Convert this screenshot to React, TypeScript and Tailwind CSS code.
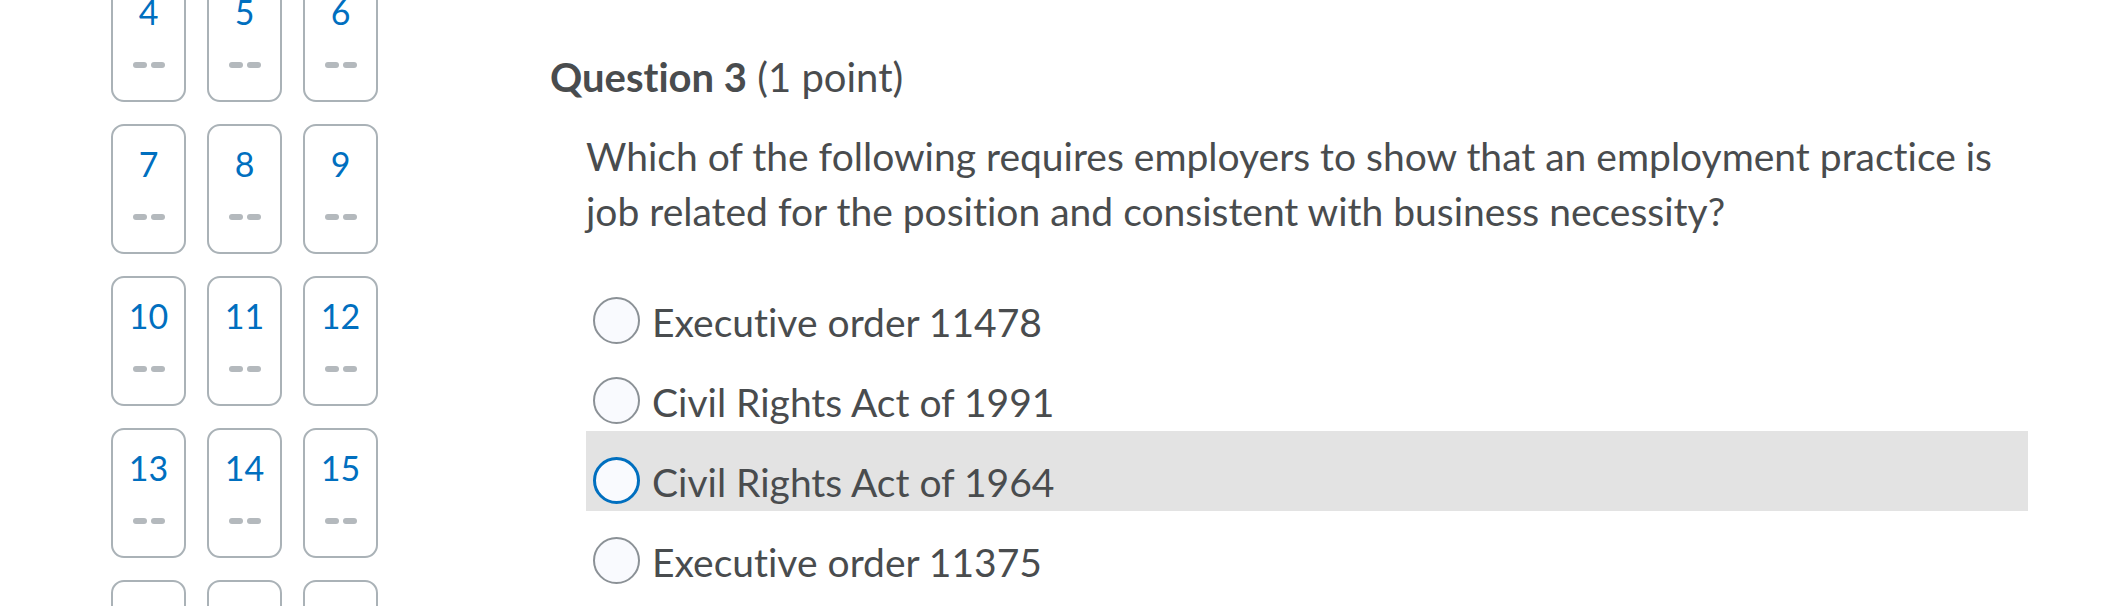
const tiles = Array.from({ length: 15 }, (_, i) => i + 4)

const options = [
  { label: "Executive order 11478", focused: false },
  { label: "Civil Rights Act of 1991", focused: false },
  { label: "Civil Rights Act of 1964", focused: true },
  { label: "Executive order 11375", focused: false },
]

function QuestionTile({ n }: { n: number }) {
  return (
    <div className="h-[130px] w-[75px] rounded-[13px] border-2 border-[#aab2b7] bg-white flex flex-col items-center">
      <span className="pt-[18px] text-[34px] leading-[40px] text-[#006fbf]">{n}</span>
      <div className="mt-[30px] flex gap-[4px]">
        <span className="h-[6px] w-[14px] rounded-[3px] bg-[#b4b9bd]" />
        <span className="h-[6px] w-[14px] rounded-[3px] bg-[#b4b9bd]" />
      </div>
    </div>
  )
}

export default function App() {
  return (
    <div
      className="h-[606px] w-[2125px] overflow-hidden bg-white text-[#494c4e] flex [font-variant-ligatures:none]"
      style={{ fontFamily: "Lato, 'Open Sans', sans-serif" }}
    >
      {/* question navigator, scrolled part-way */}
      <div className="pl-[111px] -mt-[28px]">
        <div className="grid grid-cols-[repeat(3,75px)] gap-x-[21px] gap-y-[22px]">
          {tiles.map((n) => (
            <QuestionTile key={n} n={n} />
          ))}
        </div>
      </div>

      {/* question body */}
      <div className="ml-[172px] w-[1478px] pt-[54px]">
        <h2 className="text-[40px] leading-[46px]">
          <span className="font-bold">Question 3</span> (1 point)
        </h2>

        <p className="mt-[29px] ml-[36px] w-[1442px] text-[39px] leading-[55px]">
          Which of the following requires employers to show that an employment practice is job related for the
          position and consistent with business necessity?
        </p>

        <div className="mt-[32px] ml-[36px] w-[1442px]">
          {options.map((o) => (
            <label
              key={o.label}
              className={`flex h-[80px] items-start gap-[12px] pl-[7px] pt-[26px] ${o.focused ? "bg-[#e3e3e3]" : ""}`}
            >
              <span
                className={`h-[47px] w-[47px] shrink-0 rounded-full bg-[#f9fafe] ${
                  o.focused ? "border-[3.5px] border-[#006fbf]" : "border-2 border-[#8b9196]"
                }`}
              />
              <span className="text-[39px] leading-[47px] pt-[2px]">{o.label}</span>
            </label>
          ))}
        </div>
      </div>
    </div>
  )
}
